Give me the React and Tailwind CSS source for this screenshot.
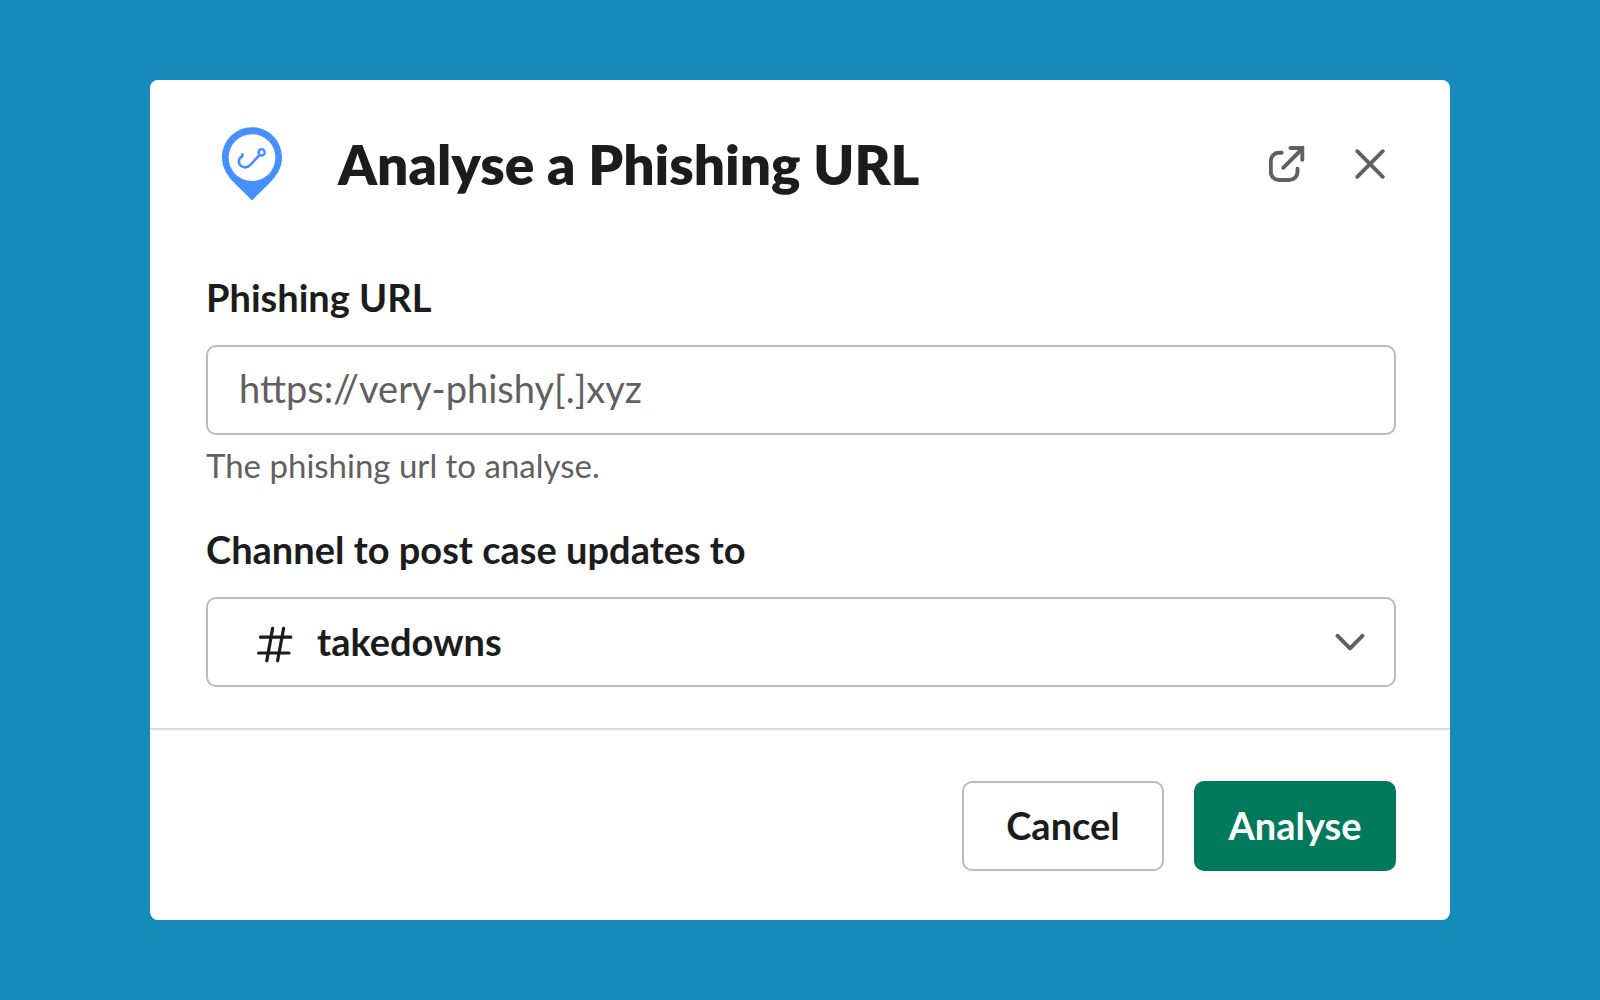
import React, { useState } from 'react';

// Pin-shaped app logo with a fish hook inside
const AppLogo = () => (
  <svg viewBox="0 0 60 74" className="w-[60px] h-[74px] shrink-0" fill="none" aria-hidden="true">
    <path
      d="M30 0.3C13.4 0.3 0 13.8 0 30.5C0 40 4.6 47.6 11 54.6C17 61 24 67.4 30 73.5C36 67.4 43 61 49 54.6C55.4 47.6 60 40 60 30.5C60 13.8 46.6 0.3 30 0.3Z"
      fill="#468fff"
    />
    <circle cx="30" cy="30.6" r="23.4" fill="#fff" />
    <path
      d="M20.4 27.2L20.2 29.4C16.2 31.2 15.6 36.6 19.6 39.2C22.6 41 26 40.2 28.4 37.8L37.3 28.2"
      stroke="#468fff"
      strokeWidth="2.6"
      strokeLinecap="round"
      strokeLinejoin="round"
    />
    <circle cx="39.6" cy="25.4" r="3.1" stroke="#468fff" strokeWidth="2.4" />
  </svg>
);

const OpenIcon = () => (
  <svg viewBox="0 0 36 36" className="w-9 h-9" fill="none" stroke="#616061" strokeWidth="3.9" strokeLinecap="round" aria-hidden="true">
    <path d="M12.7 6.8H9.5A8 8 0 0 0 1.8 14.8V26A8 8 0 0 0 9.8 34H20.5A8 8 0 0 0 28.5 26V22.8" />
    <path d="M14.2 21.8L33 3" />
    <path d="M21.4 2H33.3V13.8" strokeLinejoin="miter" />
  </svg>
);

const CloseIcon = () => (
  <svg viewBox="0 0 30 30" className="w-[30px] h-[30px]" fill="none" stroke="#616061" strokeWidth="3.8" strokeLinecap="round" aria-hidden="true">
    <path d="M2.2 2.2L27.8 27.8M27.8 2.2L2.2 27.8" />
  </svg>
);

const HashIcon = () => (
  <svg viewBox="0 0 36 38" className="mt-1 w-9 h-[38px] shrink-0" fill="none" stroke="#1d1c1d" strokeWidth="3.2" strokeLinecap="round" aria-hidden="true">
    <path d="M15.6 3.4L9.8 35.8M26.6 3.4L20.6 35.8M3.4 12.2H33.8M1.6 28H32" />
  </svg>
);

const ChevronIcon = () => (
  <svg viewBox="0 0 30 18" className="w-[30px] h-[18px] shrink-0" fill="none" stroke="#616061" strokeWidth="4" strokeLinecap="round" strokeLinejoin="round" aria-hidden="true">
    <path d="M2.6 2.8L15 15.4L27.4 2.8" />
  </svg>
);

export default function App() {
  const [url, setUrl] = useState('');
  const [channel, setChannel] = useState('takedowns');

  return (
    <div className="min-h-screen bg-[#178cbb] px-[150px] py-20 font-['Lato',sans-serif] text-[#1d1c1d]">
      <form className="bg-white rounded-lg" onSubmit={(e) => e.preventDefault()}>
        <header className="flex items-center pt-[47px] pl-[72px] pr-[65px]">
          <AppLogo />
          <h1 className="ml-14 flex-1 text-[55px] leading-[68px] font-extrabold">Analyse a Phishing URL</h1>
          <button type="button" aria-label="Open in new window">
            <OpenIcon />
          </button>
          <button type="button" aria-label="Close" className="ml-[50px]">
            <CloseIcon />
          </button>
        </header>

        <div className="flex flex-col pt-[73px] pb-[41px] pl-14 pr-[54px]">
          <label htmlFor="url" className="text-[38px] leading-[46px] font-bold">
            Phishing URL
          </label>
          <input
            id="url"
            type="text"
            value={url}
            onChange={(e) => setUrl(e.target.value)}
            placeholder="https://very-phishy[.]xyz"
            aria-describedby="url-hint"
            className="mt-[25px] h-[90px] w-full rounded-[10px] border-2 border-[#bbbbbb] px-[31px] pb-1 text-[38px] placeholder:text-[#616061] outline-none"
          />
          <p id="url-hint" className="mt-2.5 text-[33px] leading-10 text-[#616061]">
            The phishing url to analyse.
          </p>

          <label htmlFor="channel" className="mt-[41px] text-[38px] leading-[46px] font-bold">
            Channel to post case updates to
          </label>
          <div className="mt-[25px] flex h-[90px] items-center rounded-[10px] border-2 border-[#bbbbbb] pl-[49px] pr-[29px]">
            <HashIcon />
            <select
              id="channel"
              value={channel}
              onChange={(e) => setChannel(e.target.value)}
              className="ml-6 h-full flex-1 appearance-none bg-transparent pb-px text-[38px] font-bold outline-none"
            >
              <option value="takedowns">takedowns</option>
            </select>
            <ChevronIcon />
          </div>
        </div>

        <footer className="flex justify-end gap-[30px] border-t-2 border-[#dddddd] pt-[51px] pb-[49px] pl-14 pr-[54px]">
          <button type="button" className="h-[90px] w-[202px] rounded-[10px] border-2 border-[#bbbbbb] pb-0.5 text-[38px] font-bold">
            Cancel
          </button>
          <button type="submit" className="h-[90px] w-[202px] rounded-[10px] bg-[#007a5a] pb-0.5 text-[38px] font-bold text-white">
            Analyse
          </button>
        </footer>
      </form>
    </div>
  );
}
